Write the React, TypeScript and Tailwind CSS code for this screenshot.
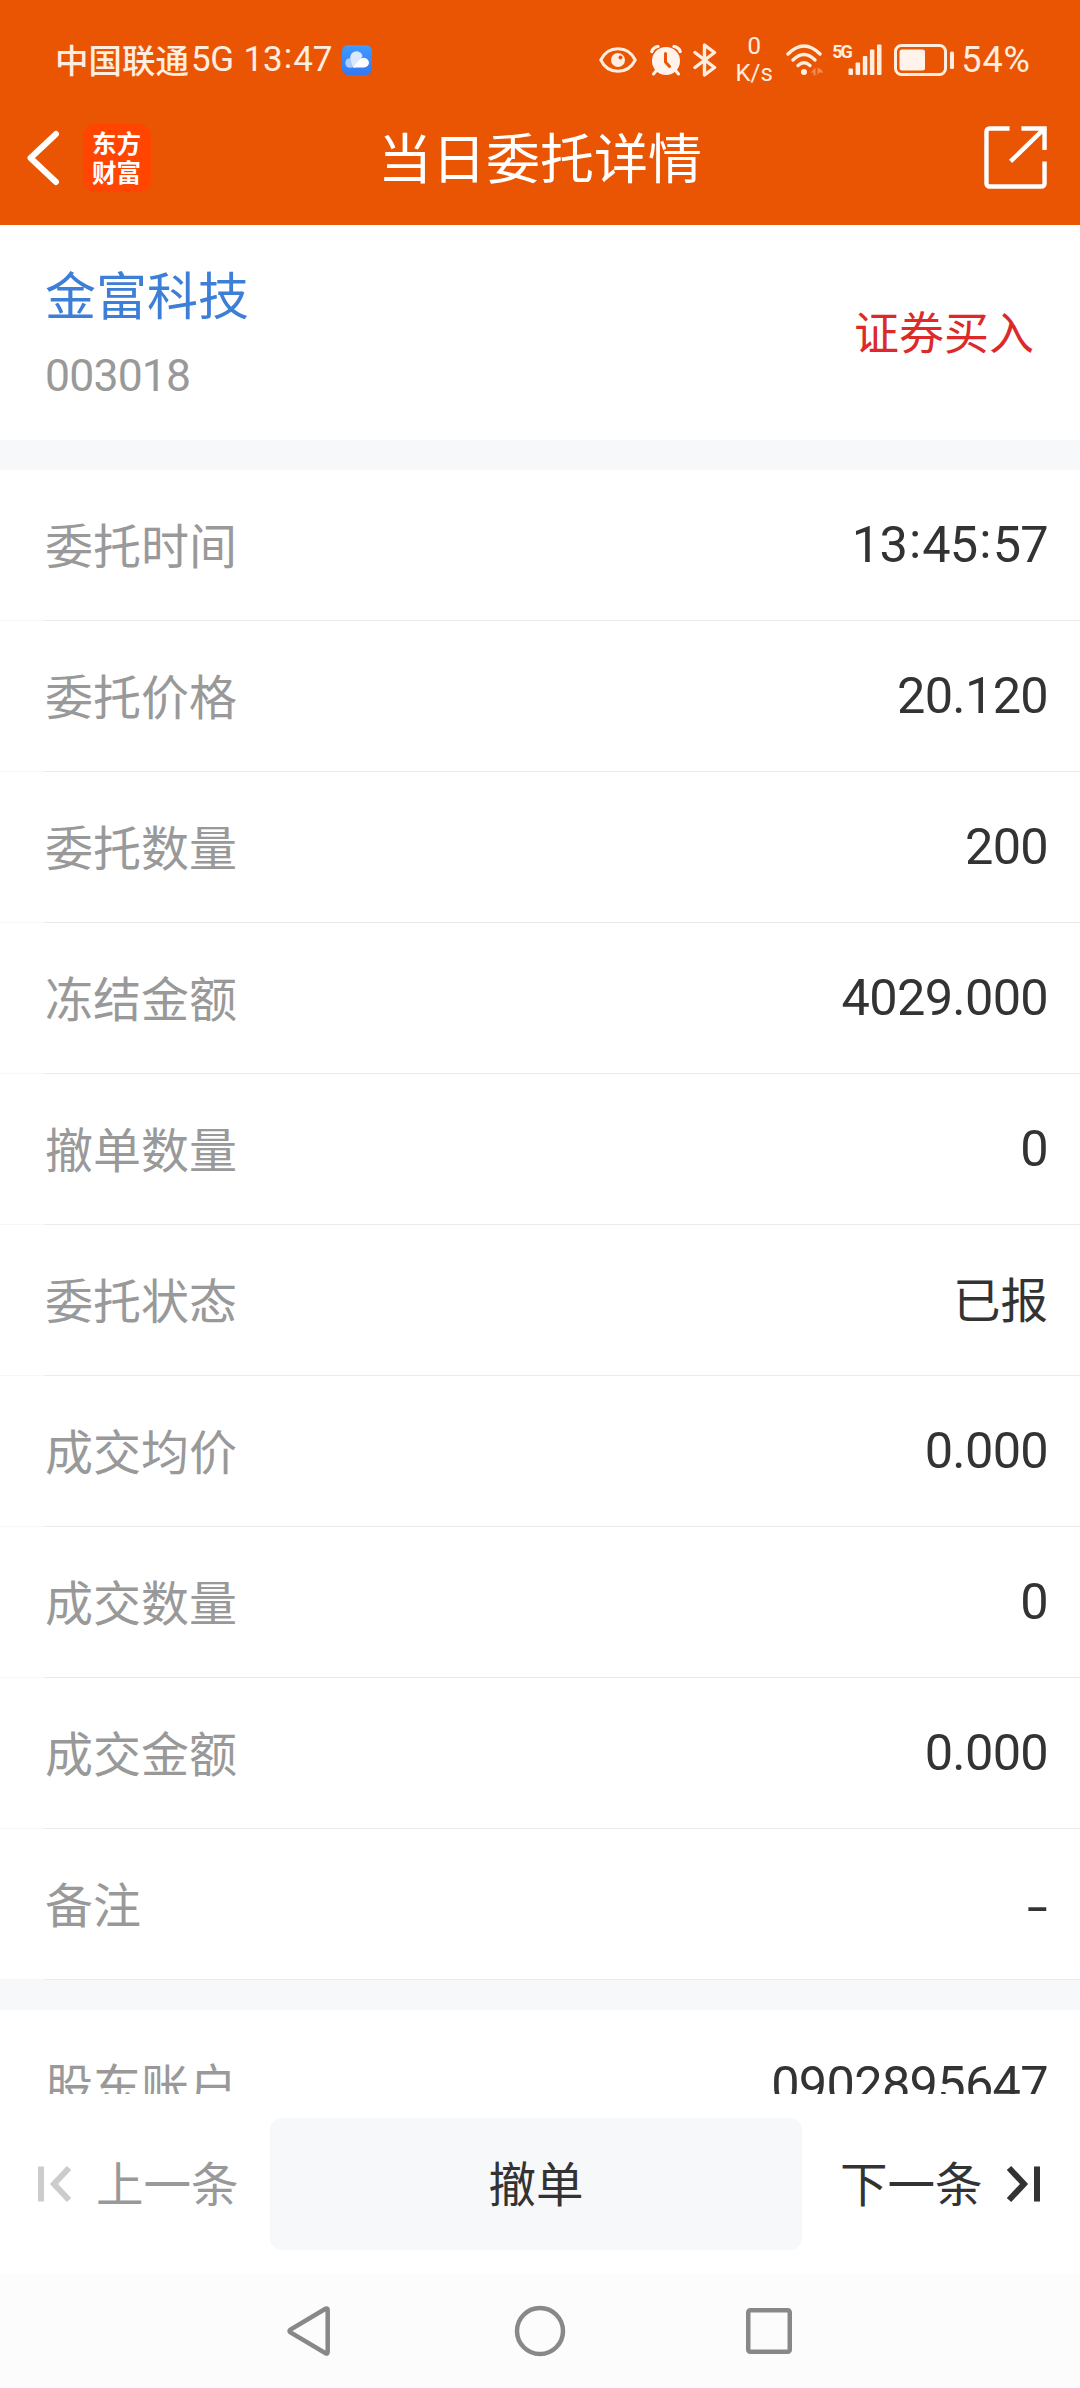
import type { ReactNode } from "react"

const rows = [
  { label: "委托时间", value: "13:45:57" },
  { label: "委托价格", value: "20.120" },
  { label: "委托数量", value: "200" },
  { label: "冻结金额", value: "4029.000" },
  { label: "撤单数量", value: "0" },
  { label: "委托状态", value: "已报" },
  { label: "成交均价", value: "0.000" },
  { label: "成交数量", value: "0" },
  { label: "成交金额", value: "0.000" },
  { label: "备注", value: "-" },
]

function Num({ className = "", children }: { className?: string; children: ReactNode }) {
  return (
    <span className={`font-['Roboto','Noto_Sans_CJK_SC',sans-serif] whitespace-nowrap ${className}`}>{children}</span>
  )
}

// colons are lifted to the middle of the digits and given some air
function Time({ value }: { value: string }) {
  return value.split(":").map((part, index) => (
    <span key={index}>
      {index > 0 && <span className="relative -top-[0.07em] px-[0.035em]">:</span>}
      {part}
    </span>
  ))
}

function CloudIcon() {
  return (
    <svg width="30" height="30" viewBox="0 0 30 30">
      <defs>
        <linearGradient id="cloudBg" x1="0" y1="0" x2="0" y2="1">
          <stop offset="0" stopColor="#3f9bff" />
          <stop offset="1" stopColor="#3478f3" />
        </linearGradient>
      </defs>
      <rect width="30" height="30" rx="6" fill="url(#cloudBg)" />
      <circle cx="8" cy="18" r="4.800" fill="#a9cbfd" />
      <path d="M11 22.500L8.500 14a6 6 0 0 1 12-3l-7 11.500z" fill="#dbe9ff" />
      <path d="M11 22.500l6.500-8a5.500 5.500 0 0 1 9.500 3 5 5 0 0 1-5 5z" fill="#fff" />
    </svg>
  )
}

function EyeIcon() {
  return (
    <svg width="38" height="26" viewBox="0 0 38 26" fill="none">
      <path d="M1.800 13C9-2 29-2 36.200 13 29 28 9 28 1.800 13z" stroke="#ffede0" strokeWidth="3" />
      <circle cx="19" cy="13" r="7" fill="#ffede0" />
      <circle cx="21.500" cy="10.500" r="2" fill="#ea5504" />
    </svg>
  )
}

function AlarmIcon() {
  return (
    <svg width="32" height="31" viewBox="0 0 32 31" fill="none" stroke="#fff3ec" strokeLinecap="round">
      <circle cx="16" cy="16" r="14" fill="#fff3ec" stroke="none" />
      <path d="M1.800 6.500Q3 2.500 8 1.500M30.200 6.500Q29 2.500 24 1.500" strokeWidth="3.200" />
      <path d="M6 26l-2.500 3M26 26l2.500 3" strokeWidth="3" />
      <path d="M15.500 8.500v8.500l4 4.500" stroke="#ea5504" strokeWidth="3" />
    </svg>
  )
}

function BluetoothIcon() {
  return (
    <svg width="24" height="34" viewBox="0 0 24 34" fill="none">
      <path
        d="M2 9.500L21.500 24.500 11.500 32V2L21.500 9.500 2 24.500"
        stroke="#ffede0"
        strokeWidth="3.400"
        strokeLinejoin="round"
        strokeLinecap="round"
      />
    </svg>
  )
}

function WifiIcon() {
  return (
    <svg width="38" height="32" viewBox="0 0 38 32" fill="none">
      <g stroke="#ffede0" strokeWidth="3.400" strokeLinecap="round">
        <path d="M2 10Q18 -6 34 10" />
        <path d="M7 16Q18 5 29 16" />
        <path d="M12 21.500Q18 16 24 21.500" />
      </g>
      <circle cx="18" cy="28" r="3" fill="#ffede0" />
      <path d="M25 28.500l4.500-5v8h-2v-3zM31.500 23.500v8l1.500-3h4.500l-2.500-3z" fill="#f58b54" />
    </svg>
  )
}

function SignalIcon() {
  return (
    <svg width="34" height="32" viewBox="0 0 34 32" fill="#ffede0">
      <rect x="0.500" y="24.500" width="4.500" height="6.500" rx="1" />
      <rect x="7.600" y="18.500" width="4.500" height="12.500" rx="1" />
      <rect x="14.800" y="12" width="4.500" height="19" rx="1" />
      <rect x="21.900" y="5.500" width="4.500" height="25.500" rx="1" />
      <rect x="29" y="0.500" width="4.500" height="30.500" rx="1" />
    </svg>
  )
}

function BatteryIcon() {
  return (
    <svg width="60" height="32" viewBox="0 0 60 32" fill="none">
      <rect x="1.500" y="1.500" width="50" height="29" rx="6" stroke="#ffede0" strokeWidth="3" />
      <rect x="5.500" y="5.500" width="25.500" height="21" rx="2.500" fill="#fff3ec" />
      <rect x="56" y="7.500" width="4" height="17.500" rx="1.500" fill="#ffede0" />
    </svg>
  )
}

function StatusBar() {
  return (
    <div className="flex h-[90px] items-center justify-between pt-[30px] pr-[49px] pl-[55px] text-[#ffede0]">
      <div className="flex h-[60px] items-center">
        <span className="mb-[1px] text-[33.5px] font-medium whitespace-nowrap">中国联通</span>
        <Num className="ml-[2px] text-[35px] tracking-[-0.5px]">5G</Num>
        <Num className="ml-[10px] text-[35px] tracking-[-0.2px]">
          <Time value="13:47" />
        </Num>
        <div className="ml-[10px]">
          <CloudIcon />
        </div>
      </div>
      <div className="flex h-[60px] items-center">
        <EyeIcon />
        <div className="ml-[13px]">
          <AlarmIcon />
        </div>
        <div className="ml-[11px]">
          <BluetoothIcon />
        </div>
        <div className="ml-[18px] flex w-[38px] flex-col items-center">
          <Num className="text-[24px] leading-[27px]">0</Num>
          <Num className="text-[24px] leading-[27px]">K/s</Num>
        </div>
        <div className="ml-[13px]">
          <WifiIcon />
        </div>
        <Num className="mb-[17px] ml-[8px] w-[16px] text-[18px] leading-[18px] font-bold tracking-[-2px]">5G</Num>
        <SignalIcon />
        <div className="ml-[12px]">
          <BatteryIcon />
        </div>
        <Num className="ml-[7px] text-[36px] tracking-[1px]">54%</Num>
      </div>
    </div>
  )
}

function TitleBar() {
  return (
    <div className="grid h-[135px] grid-cols-[1fr_auto_1fr] items-center px-[26px] text-white">
      <div className="flex items-center">
        <svg width="34" height="56" viewBox="0 0 34 56" fill="none">
          <path d="M30 4L4.500 28 30 52" stroke="#fff" strokeWidth="6" strokeLinecap="round" strokeLinejoin="round" />
        </svg>
        <div className="ml-[23px] flex h-[68px] w-[68px] items-center justify-center rounded-[13px] bg-[#ff4500]">
          <span className="mb-[2px] w-[50px] text-[24.5px] leading-[29px] font-bold break-all">东方财富</span>
        </div>
      </div>
      <h1 className="mb-[4px] text-[54px] leading-[60px]">当日委托详情</h1>
      <svg className="mr-[7px] justify-self-end" width="63" height="63" viewBox="0 0 64 64" fill="none">
        <path
          d="M26 2.500H5.500a3 3 0 0 0-3 3v53a3 3 0 0 0 3 3h53a3 3 0 0 0 3-3V36"
          stroke="#fff"
          strokeWidth="4.500"
        />
        <path d="M38 2.500H61.500V24.500M61 3L27 36" stroke="#fff" strokeWidth="4.500" />
      </svg>
    </div>
  )
}

function RowValue({ value }: { value: string }) {
  if (value === "-") {
    return (
      <Num className="inline-block origin-right translate-y-[3px] scale-x-150 text-[50px] leading-[60px] text-[#333333]">
        -
      </Num>
    )
  }
  if (!/\d/.test(value)) {
    return <span className="mb-[4px] text-[47.5px] leading-[60px] text-[#333333]">{value}</span>
  }
  return (
    <Num className="text-[50.5px] leading-[60px] tracking-[-0.7px] text-[#333333]">
      <Time value={value} />
    </Num>
  )
}

function DetailRow({ label, value }: { label: string; value: string }) {
  return (
    <div className="flex h-[150px] items-center justify-between pr-[32px] pl-[45px]">
      <span className="mb-[4px] text-[48px] leading-[60px] text-[#999999]">{label}</span>
      <RowValue value={value} />
    </div>
  )
}

function Divider() {
  return (
    <div className="h-px bg-[#f7f7f7] pl-[45px]">
      <div className="h-px bg-[#ebebeb]" />
    </div>
  )
}

function ActionBar() {
  return (
    <div className="flex h-[180px] items-center bg-white text-[47.5px] leading-[60px]">
      <div className="flex w-[270px] items-center pl-[38px] text-[#999999]">
        <svg width="34" height="38" viewBox="0 0 34 38" fill="none" stroke="#cccccc" strokeWidth="6">
          <path d="M3 1.500v35M31 3L16 19l15 16" />
        </svg>
        <span className="mb-[4px] ml-[24px]">上一条</span>
      </div>
      <button className="h-[132px] w-[532px] rounded-[12px] bg-[#f7f8fa] pb-[4px] text-[#333333]">撤单</button>
      <div className="flex flex-1 items-center pl-[38px] text-[#333333]">
        <span className="mb-[4px]">下一条</span>
        <svg className="ml-[23px]" width="34" height="38" viewBox="0 0 34 38" fill="none" stroke="#333333" strokeWidth="6">
          <path d="M31 1.500v35M3 3l15 16L3 35" />
        </svg>
      </div>
    </div>
  )
}

function NavBar() {
  return (
    <div className="flex h-[114px] items-center bg-[#fcfcfc] pl-[286px]">
      <svg width="46" height="52" viewBox="0 0 46 52" fill="none" stroke="#888888" strokeWidth="4.500">
        <path d="M39.500 3.700L4.500 24.500q-2 1.500 0 3L39.500 48.300q2.200 0.800 2.200-1.500V5.200q0-2.300-2.200-1.500z" />
      </svg>
      <svg className="ml-[182px]" width="52" height="52" viewBox="0 0 52 52" fill="none" stroke="#888888" strokeWidth="4.500">
        <circle cx="26" cy="26" r="23" />
      </svg>
      <svg className="ml-[180px]" width="46" height="46" viewBox="0 0 46 46" fill="none" stroke="#888888" strokeWidth="4.500">
        <rect x="2.250" y="2.250" width="41.500" height="41.500" rx="2" />
      </svg>
    </div>
  )
}

export default function App() {
  return (
    <div className="flex h-[2388px] w-[1080px] flex-col overflow-hidden bg-white font-['Noto_Sans_CJK_SC',sans-serif]">
      <header className="h-[225px] bg-[#ea5504]">
        <StatusBar />
        <TitleBar />
      </header>
      <main className="h-[1869px] overflow-hidden">
        <section className="flex h-[215px] items-center justify-between pr-[46px] pl-[45px]">
          <div className="flex flex-col">
            <span className="text-[51px] leading-[66px] text-[#3d7fd6]">金富科技</span>
            <Num className="mt-[20px] text-[44.5px] leading-[60px] tracking-[-0.8px] text-[#999999]">003018</Num>
          </div>
          <span className="mb-[4px] text-[45px] leading-[60px] text-[#dc2a2a]">证券买入</span>
        </section>
        <div className="h-[30px] bg-[#f7f8fa]" />
        {rows.map((row) => (
          <div key={row.label}>
            <DetailRow label={row.label} value={row.value} />
            <Divider />
          </div>
        ))}
        <div className="h-[30px] bg-[#f7f8fa]" />
        <DetailRow label="股东账户" value="0902895647" />
      </main>
      <ActionBar />
      <NavBar />
    </div>
  )
}
